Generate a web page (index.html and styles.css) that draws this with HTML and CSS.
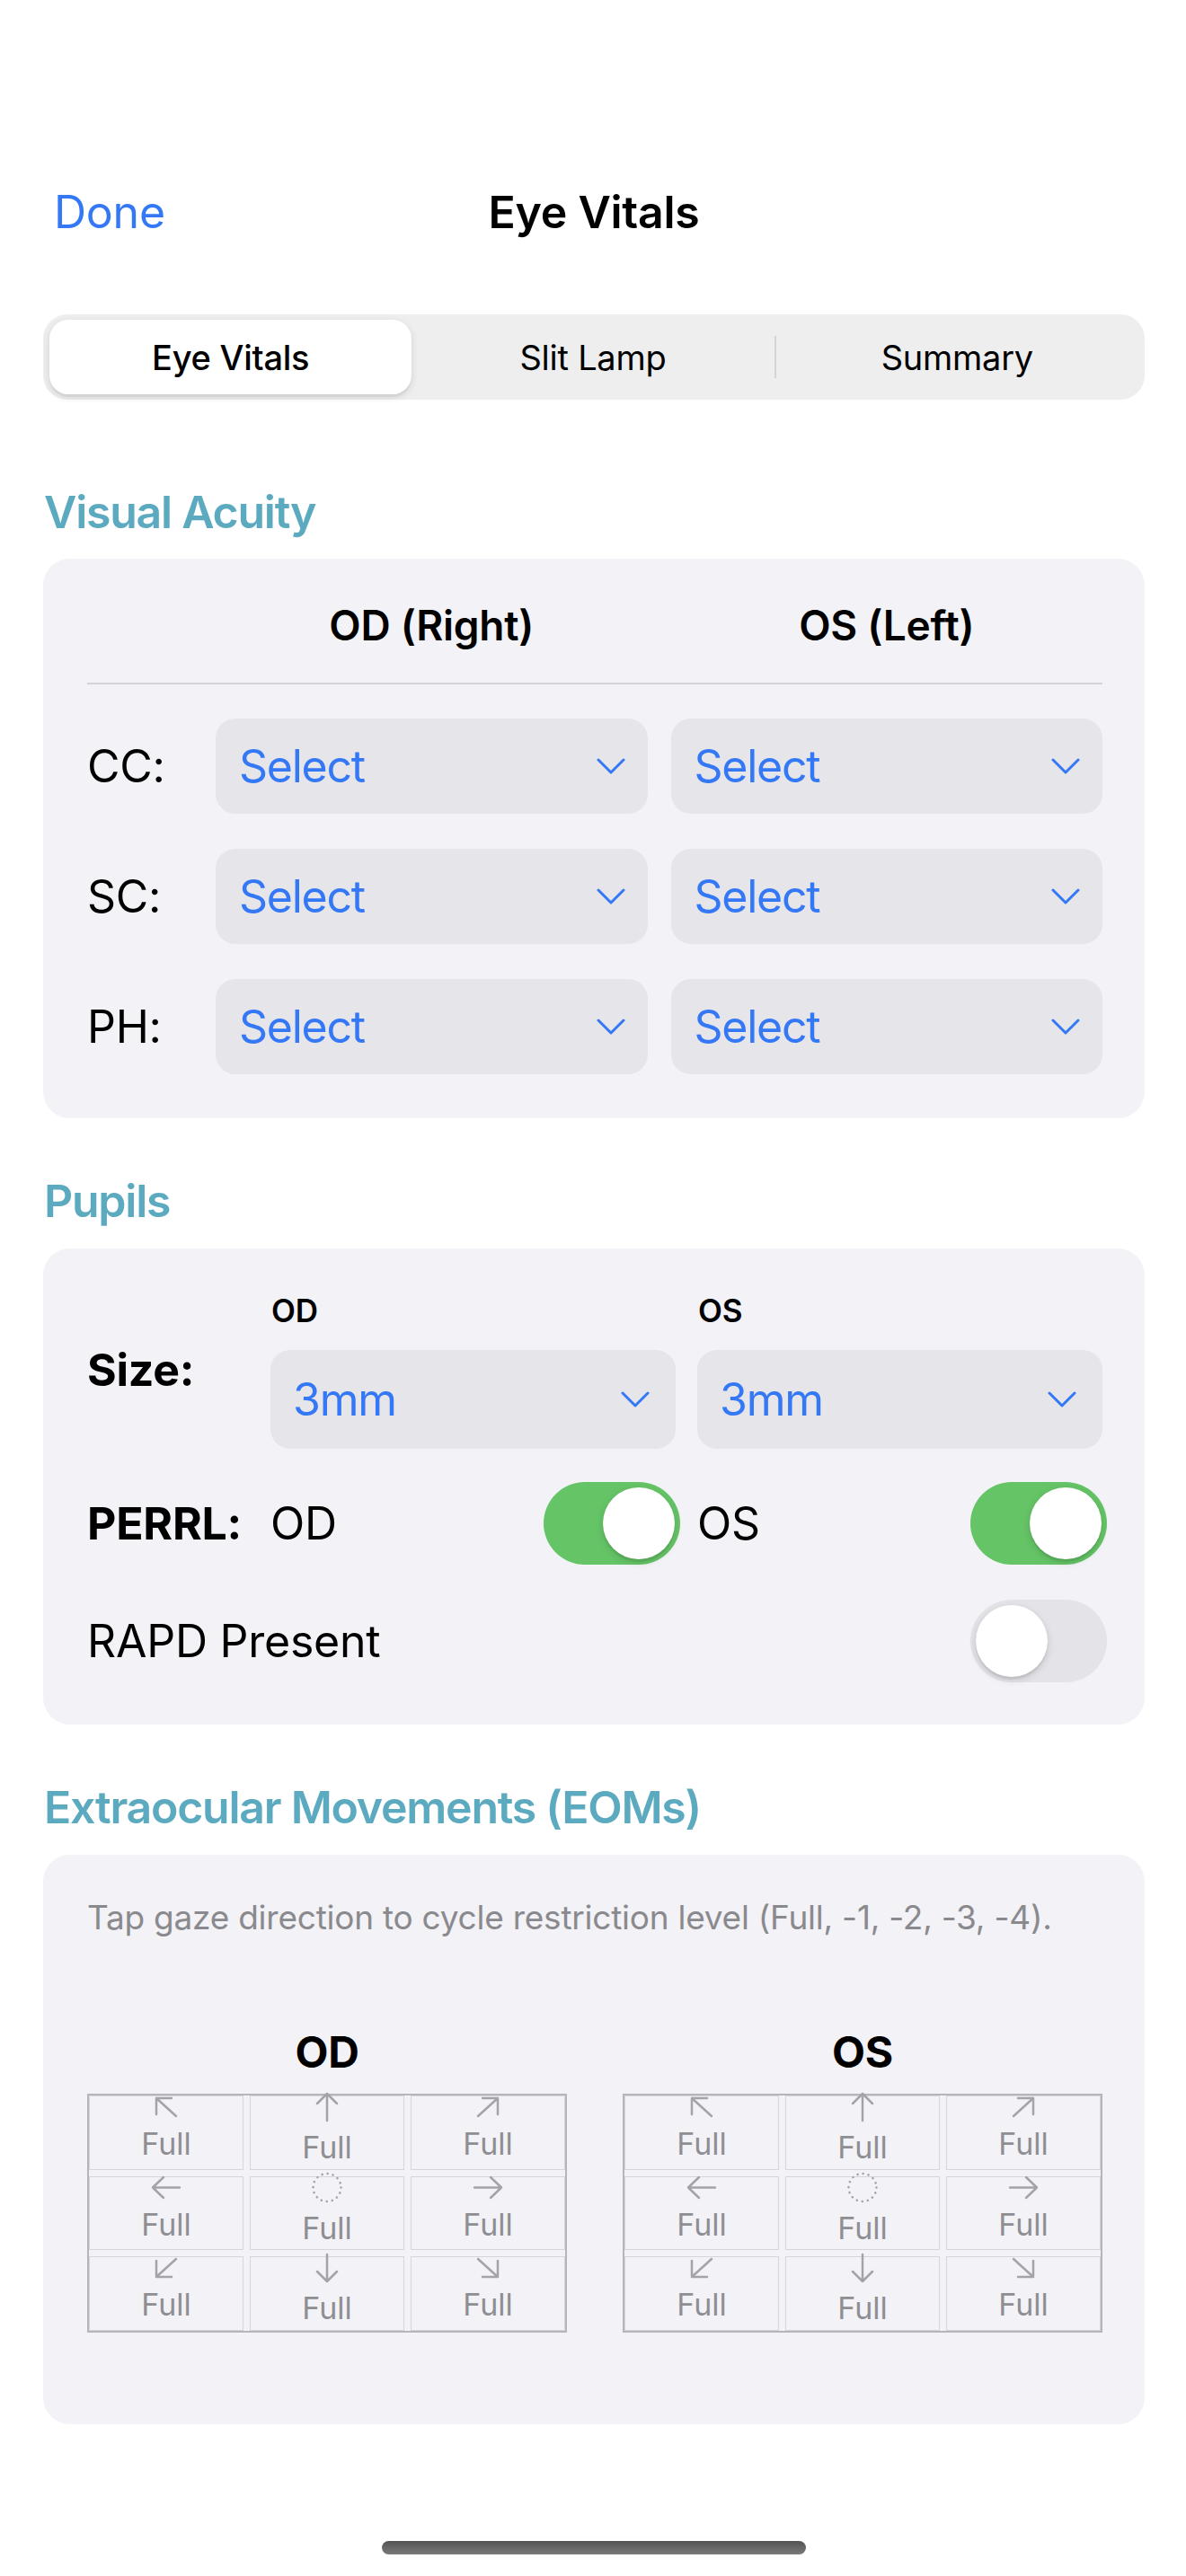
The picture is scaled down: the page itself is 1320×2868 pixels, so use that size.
FILE: index.html
```html
<!DOCTYPE html>
<html lang="en">
<head>
<meta charset="utf-8">
<title>Eye Vitals</title>
<link rel="stylesheet" href="styles.css">
</head>
<body>
<div class="screen">
  <header class="nav">
    <span class="nav-done">Done</span>
    <span class="nav-title">Eye Vitals</span>
    <span></span>
  </header>

  <div class="segmented">
    <div class="seg seg-active">Eye Vitals</div>
    <div class="seg">Slit Lamp</div>
    <div class="seg-divider"></div>
    <div class="seg">Summary</div>
  </div>

  <h2 class="section-title first">Visual Acuity</h2>
  <section class="card va-card">
    <div class="va-head">
      <span></span>
      <span>OD (Right)</span>
      <span>OS (Left)</span>
    </div>
    <div class="rule"></div>
    <div class="va-grid">
      <span class="row-label">CC:</span>
      <div class="picker"><span>Select</span><svg class="chev" width="32" height="18" viewBox="0 0 32 18"><polyline points="2,2 16,16 30,2"/></svg></div>
      <div class="picker"><span>Select</span><svg class="chev" width="32" height="18" viewBox="0 0 32 18"><polyline points="2,2 16,16 30,2"/></svg></div>
      <span class="row-label">SC:</span>
      <div class="picker"><span>Select</span><svg class="chev" width="32" height="18" viewBox="0 0 32 18"><polyline points="2,2 16,16 30,2"/></svg></div>
      <div class="picker"><span>Select</span><svg class="chev" width="32" height="18" viewBox="0 0 32 18"><polyline points="2,2 16,16 30,2"/></svg></div>
      <span class="row-label">PH:</span>
      <div class="picker"><span>Select</span><svg class="chev" width="32" height="18" viewBox="0 0 32 18"><polyline points="2,2 16,16 30,2"/></svg></div>
      <div class="picker"><span>Select</span><svg class="chev" width="32" height="18" viewBox="0 0 32 18"><polyline points="2,2 16,16 30,2"/></svg></div>
    </div>
  </section>

  <h2 class="section-title">Pupils</h2>
  <section class="card pupils-card">
    <div class="pupil-grid">
      <span class="row-label bold">Size:</span>
      <div class="size-col">
        <span class="small-label">OD</span>
        <div class="picker tall"><span>3mm</span><svg class="chev" width="32" height="18" viewBox="0 0 32 18"><polyline points="2,2 16,16 30,2"/></svg></div>
      </div>
      <div class="size-col">
        <span class="small-label">OS</span>
        <div class="picker tall"><span>3mm</span><svg class="chev" width="32" height="18" viewBox="0 0 32 18"><polyline points="2,2 16,16 30,2"/></svg></div>
      </div>
    </div>
    <div class="pupil-grid perrl-row">
      <span class="row-label bold">PERRL:</span>
      <div class="toggle-cell"><span class="row-label">OD</span><span class="toggle on"><span class="knob"></span></span></div>
      <div class="toggle-cell"><span class="row-label">OS</span><span class="toggle on"><span class="knob"></span></span></div>
    </div>
    <div class="rapd-row">
      <span class="row-label">RAPD Present</span>
      <span class="toggle off"><span class="knob"></span></span>
    </div>
  </section>

  <h2 class="section-title">Extraocular Movements (EOMs)</h2>
  <section class="card eom-card">
    <p class="eom-hint">Tap gaze direction to cycle restriction level (Full, -1, -2, -3, -4).</p>
    <div class="eom-eyes">
      <div class="eom-eye">
        <h3 class="eye-title">OD</h3>
        <div class="gaze">
          <div class="gaze-cell"><svg width="28" height="26" viewBox="0 0 28 26"><path d="M3 3 L25 23 M3 3 H20 M3 3 V21"/></svg><span>Full</span></div>
          <div class="gaze-cell"><svg width="28" height="34" viewBox="0 0 28 34"><path d="M14 2 V32 M3 13 L14 2 L25 13"/></svg><span>Full</span></div>
          <div class="gaze-cell"><svg width="28" height="26" viewBox="0 0 28 26"><path d="M25 3 L3 23 M25 3 H8 M25 3 V21"/></svg><span>Full</span></div>
          <div class="gaze-cell"><svg width="34" height="27" viewBox="0 0 34 27"><path d="M2 13.5 H32 M14 2 L2 13.5 L14 25"/></svg><span>Full</span></div>
          <div class="gaze-cell"><svg width="36" height="35" viewBox="0 0 36 35"><circle class="dots" cx="18" cy="17.5" r="15.5"/></svg><span>Full</span></div>
          <div class="gaze-cell"><svg width="34" height="27" viewBox="0 0 34 27"><path d="M2 13.5 H32 M20 2 L32 13.5 L20 25"/></svg><span>Full</span></div>
          <div class="gaze-cell"><svg width="28" height="26" viewBox="0 0 28 26"><path d="M3 23 L25 3 M3 23 H20 M3 23 V5"/></svg><span>Full</span></div>
          <div class="gaze-cell"><svg width="28" height="34" viewBox="0 0 28 34"><path d="M14 2 V32 M3 21 L14 32 L25 21"/></svg><span>Full</span></div>
          <div class="gaze-cell"><svg width="28" height="26" viewBox="0 0 28 26"><path d="M25 23 L3 3 M25 23 H8 M25 23 V5"/></svg><span>Full</span></div>
        </div>
      </div>
      <div class="eom-eye">
        <h3 class="eye-title">OS</h3>
        <div class="gaze">
          <div class="gaze-cell"><svg width="28" height="26" viewBox="0 0 28 26"><path d="M3 3 L25 23 M3 3 H20 M3 3 V21"/></svg><span>Full</span></div>
          <div class="gaze-cell"><svg width="28" height="34" viewBox="0 0 28 34"><path d="M14 2 V32 M3 13 L14 2 L25 13"/></svg><span>Full</span></div>
          <div class="gaze-cell"><svg width="28" height="26" viewBox="0 0 28 26"><path d="M25 3 L3 23 M25 3 H8 M25 3 V21"/></svg><span>Full</span></div>
          <div class="gaze-cell"><svg width="34" height="27" viewBox="0 0 34 27"><path d="M2 13.5 H32 M14 2 L2 13.5 L14 25"/></svg><span>Full</span></div>
          <div class="gaze-cell"><svg width="36" height="35" viewBox="0 0 36 35"><circle class="dots" cx="18" cy="17.5" r="15.5"/></svg><span>Full</span></div>
          <div class="gaze-cell"><svg width="34" height="27" viewBox="0 0 34 27"><path d="M2 13.5 H32 M20 2 L32 13.5 L20 25"/></svg><span>Full</span></div>
          <div class="gaze-cell"><svg width="28" height="26" viewBox="0 0 28 26"><path d="M3 23 L25 3 M3 23 H20 M3 23 V5"/></svg><span>Full</span></div>
          <div class="gaze-cell"><svg width="28" height="34" viewBox="0 0 28 34"><path d="M14 2 V32 M3 21 L14 32 L25 21"/></svg><span>Full</span></div>
          <div class="gaze-cell"><svg width="28" height="26" viewBox="0 0 28 26"><path d="M25 23 L3 3 M25 23 H8 M25 23 V5"/></svg><span>Full</span></div>
        </div>
      </div>
    </div>
  </section>

  <div class="home-indicator"></div>
</div>
</body>
</html>
```
FILE: styles.css
```css
html, body {
  margin: 0;
  padding: 0;
  background: #ffffff;
}

body {
  font-family: Inter, "Noto Sans", "Liberation Sans", sans-serif;
  color: #000000;
  letter-spacing: -0.015em;
}

.screen {
  width: 1320px;
  height: 2868px;
  box-sizing: border-box;
  padding: 0 46px 0 48px;
  display: flex;
  flex-direction: column;
}

/* Navigation bar */
.nav {
  margin-top: 170px;
  height: 132px;
  display: grid;
  grid-template-columns: 1fr auto 1fr;
  align-items: center;
}

.nav-done {
  font-size: 50px;
  color: #3478f6;
  padding-left: 12px;
}

.nav-title {
  font-size: 50px;
  font-weight: 600;
}

/* Segmented control */
.segmented {
  margin-top: 48px;
  height: 95px;
  box-sizing: border-box;
  background: #eeeeef;
  border-radius: 27px;
  padding: 6px 7px;
  display: flex;
  align-items: center;
}

.seg {
  flex: 1;
  height: 100%;
  display: flex;
  align-items: center;
  justify-content: center;
  font-size: 38px;
}

.seg-active {
  background: #ffffff;
  border-radius: 21px;
  font-weight: 500;
  box-shadow: 0 3px 8px rgba(0, 0, 0, 0.12), 0 3px 1px rgba(0, 0, 0, 0.04);
}

.seg-divider {
  width: 2px;
  height: 47px;
  background: #d4d4d8;
}

/* Section titles */
.section-title {
  margin: 58px 0 19px;
  padding-left: 1px;
  font-size: 50px;
  font-weight: 600;
  line-height: 68px;
  letter-spacing: -0.025em;
  color: #5caabf;
}

.section-title.first {
  margin-top: 91px;
  margin-bottom: 18px;
}

/* Cards */
.card {
  background: #f2f2f7;
  border-radius: 30px;
  padding: 0 47px 0 49px;
}

.va-card {
  padding-top: 44px;
  padding-bottom: 49px;
}

.va-head {
  display: grid;
  grid-template-columns: 117px 1fr 1fr;
  column-gap: 26px;
  font-size: 46px;
  font-weight: 600;
  line-height: 60px;
  text-align: center;
}

.rule {
  height: 2px;
  background: #d3d3d8;
  margin-top: 34px;
}

.va-grid {
  margin-top: 38px;
  display: grid;
  grid-template-columns: 117px 1fr 1fr;
  column-gap: 26px;
  row-gap: 39px;
  align-items: center;
}

.row-label {
  font-size: 50px;
}

.row-label.bold {
  font-weight: 700;
}

.picker {
  height: 106px;
  box-sizing: border-box;
  background: #e5e5ea;
  border-radius: 22px;
  padding: 0 25px 0 26px;
  display: flex;
  align-items: center;
  justify-content: space-between;
  font-size: 50px;
  letter-spacing: -0.025em;
  color: #3478f6;
}

.picker.tall {
  height: 110px;
  padding: 0 29px 0 25px;
}

.chev polyline {
  fill: none;
  stroke: #3478f6;
  stroke-width: 3;
  stroke-linecap: round;
  stroke-linejoin: round;
}

/* Pupils */
.pupils-card {
  padding-top: 47px;
  padding-bottom: 47px;
}

.pupil-grid {
  display: grid;
  grid-template-columns: 180px 1fr 1fr;
  column-gap: 24px;
  align-items: center;
}

.size-col {
  display: flex;
  flex-direction: column;
  gap: 22px;
}

.small-label {
  font-size: 35px;
  font-weight: 600;
  line-height: 44px;
  padding-left: 1px;
}

.perrl-row {
  margin-top: 37px;
}

.toggle-cell {
  display: flex;
  align-items: center;
  justify-content: space-between;
}

.toggle {
  width: 152px;
  height: 92px;
  border-radius: 46px;
  box-sizing: border-box;
  padding: 6px;
  display: flex;
  align-items: center;
  margin-right: -5px;
}

.toggle.on {
  background: #65c466;
  justify-content: flex-end;
}

.toggle.off {
  background: #e3e3e8;
  justify-content: flex-start;
}

.knob {
  width: 80px;
  height: 80px;
  border-radius: 50%;
  background: #ffffff;
  box-shadow: 0 3px 8px rgba(0, 0, 0, 0.15), 0 3px 1px rgba(0, 0, 0, 0.06);
}

.rapd-row {
  margin-top: 39px;
  display: flex;
  align-items: center;
  justify-content: space-between;
}

/* EOMs */
.eom-card {
  padding-top: 47px;
  padding-bottom: 102px;
}

.eom-hint {
  margin: 0;
  font-size: 37px;
  line-height: 46px;
  color: #8a8a8e;
}

.eom-eyes {
  margin-top: 97px;
  display: grid;
  grid-template-columns: 1fr 1fr;
  column-gap: 62px;
}

.eye-title {
  margin: 0 0 16px;
  text-align: center;
  font-size: 48px;
  font-weight: 700;
  line-height: 60px;
}

.gaze {
  height: 266px;
  box-sizing: border-box;
  border: 2px solid #b5b5ba;
  display: grid;
  grid-template-columns: repeat(3, 1fr);
  grid-template-rows: repeat(3, 1fr);
  gap: 7px;
}

.gaze-cell {
  border: 1.5px solid #d5d5da;
  display: flex;
  flex-direction: column;
  align-items: center;
  justify-content: center;
  gap: 7px;
  padding-bottom: 8px;
  min-height: 0;
  font-size: 34px;
  line-height: 42px;
  color: #8e8e93;
  letter-spacing: 0;
}

.gaze-cell svg {
  flex: none;
}

.gaze-cell path,
.gaze-cell circle {
  fill: none;
  stroke: #a3a3a8;
  stroke-width: 2.5;
  stroke-linecap: round;
  stroke-linejoin: round;
}

.gaze-cell circle.dots {
  stroke-width: 2.6;
  stroke-dasharray: 0.01 6.09;
}

/* Home indicator */
.home-indicator {
  margin: auto auto 24px;
  width: 472px;
  height: 15px;
  border-radius: 8px;
  background: linear-gradient(#535353, #7a7a7a);
}
```
